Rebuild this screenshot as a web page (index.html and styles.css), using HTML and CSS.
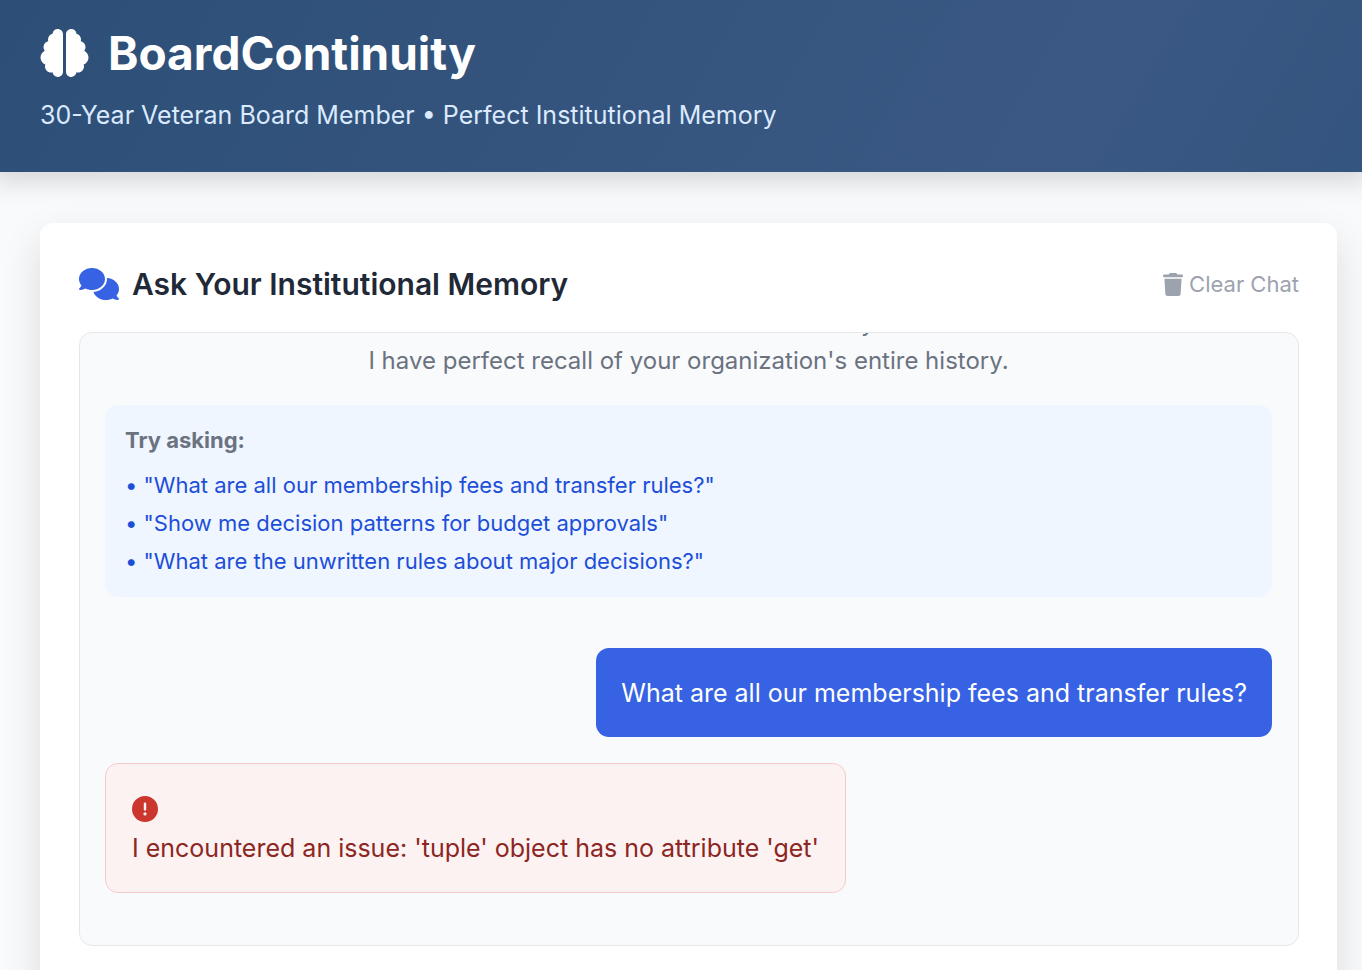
FILE: index.html
```html
<!DOCTYPE html>
<html lang="en">
<head>
<meta charset="utf-8">
<meta name="viewport" content="width=device-width, initial-scale=1">
<title>BoardContinuity</title>
<link rel="stylesheet" href="styles.css">
</head>
<body>
<header class="site-header">
  <div class="brand">
    <svg class="brand-icon" viewBox="0 0 512 512" aria-hidden="true"><path d="M184 0c30.9 0 56 25.1 56 56V456c0 30.9-25.1 56-56 56c-28.9 0-52.7-21.9-55.7-50.1c-5.2 1.4-10.7 2.1-16.3 2.1c-35.3 0-64-28.7-64-64c0-7.4 1.3-14.6 3.6-21.2C21.4 367.4 0 338.2 0 304c0-31.9 18.7-59.5 45.8-72.3C37.1 220.8 32 207 32 192c0-30.7 21.6-56.3 50.4-62.6C80.8 123.9 80 118 80 112c0-29.9 20.6-55.1 48.3-62.1C131.3 21.9 155.1 0 184 0zM328 0c28.9 0 52.6 21.9 55.7 49.9c27.8 7 48.3 32.1 48.3 62.1c0 6-.8 11.9-2.4 17.4c28.8 6.2 50.4 31.9 50.4 62.6c0 15-5.1 28.8-13.8 39.7C493.3 244.5 512 272.1 512 304c0 34.2-21.4 63.4-51.6 74.8c2.3 6.6 3.6 13.8 3.6 21.2c0 35.3-28.7 64-64 64c-5.6 0-11.1-.7-16.3-2.1c-3 28.2-26.8 50.1-55.7 50.1c-30.9 0-56-25.1-56-56V56c0-30.9 25.1-56 56-56z"/></svg>
    <h1 class="brand-name">BoardContinuity</h1>
  </div>
  <p class="tagline">30-Year Veteran Board Member • Perfect Institutional Memory</p>
</header>
<main class="page">
  <section class="card">
    <div class="card-head">
      <h2 class="card-title">
        <svg class="title-icon" viewBox="0 0 640 512" aria-hidden="true"><path d="M208 352c114.9 0 208-78.8 208-176S322.9 0 208 0S0 78.8 0 176c0 38.6 14.7 74.3 39.6 103.4c-3.5 9.4-8.7 17.7-14.2 24.7c-4.8 6.2-9.7 11-13.3 14.3c-1.8 1.6-3.3 2.9-4.3 3.7c-.5 .4-.9 .7-1.1 .8l-.2 .2C1 327.2-1.4 334.4 .8 340.9S9.1 352 16 352c21.8 0 43.8-5.6 62.1-12.5c9.2-3.5 17.8-7.4 25.2-11.4C134.1 343.3 169.8 352 208 352zM448 176c0 112.3-99.1 196.9-216.5 207C255.8 457.4 336.4 512 432 512c38.2 0 73.9-8.7 104.7-23.9c7.5 4 16 7.9 25.2 11.4c18.3 6.9 40.3 12.5 62.1 12.5c6.9 0 13.1-4.5 15.2-11.1c2.1-6.6-.2-13.8-5.8-17.9l-.2-.2c-.2-.2-.6-.4-1.1-.8c-1-.8-2.5-2-4.3-3.7c-3.6-3.3-8.5-8.1-13.3-14.3c-5.5-7-10.7-15.4-14.2-24.7c24.9-29 39.6-64.7 39.6-103.4c0-92.8-84.9-168.9-192.6-175.5c.4 5.1 .6 10.3 .6 15.500z"/></svg>
        Ask Your Institutional Memory
      </h2>
      <button class="clear-button" type="button">
        <svg class="clear-icon" viewBox="0 0 448 512" aria-hidden="true"><path d="M135.2 17.7L128 32H32C14.3 32 0 46.3 0 64S14.3 96 32 96H416c17.7 0 32-14.3 32-32s-14.3-32-32-32H320l-7.2-14.3C307.4 6.8 296.3 0 284.2 0H163.8c-12.1 0-23.2 6.8-28.6 17.7zM416 128H32L53.2 467c1.6 25.3 22.6 45 47.9 45H346.9c25.3 0 46.3-19.7 47.9-45L416 128z"/></svg>
        Clear Chat
      </button>
    </div>
    <div class="chat">
      <div class="welcome">
        <p class="welcome-text">Welcome to Institutional Memory<br>I have perfect recall of your organization's entire history.</p>
        <div class="suggestions">
          <p class="suggestions-title">Try asking:</p>
          <ul class="suggestion-list">
            <li><button class="suggestion" type="button">• "What are all our membership fees and transfer rules?"</button></li>
            <li><button class="suggestion" type="button">• "Show me decision patterns for budget approvals"</button></li>
            <li><button class="suggestion" type="button">• "What are the unwritten rules about major decisions?"</button></li>
          </ul>
        </div>
      </div>
      <div class="message message-user">What are all our membership fees and transfer rules?</div>
      <div class="message message-error">
        <svg class="error-icon" viewBox="0 0 512 512" aria-hidden="true"><path d="M256 512A256 256 0 1 0 256 0a256 256 0 1 0 0 512zm0-384c13.300 0 24 10.700 24 24V264c0 13.300-10.700 24-24 24s-24-10.700-24-24V152c0-13.300 10.700-24 24-24zM224 352a32 32 0 1 1 64 0 32 32 0 1 1 -64 0z"/></svg>
        <p class="error-text">I encountered an issue: 'tuple' object has no attribute 'get'</p>
      </div>
    </div>
  </section>
</main>
</body>
</html>
```
FILE: styles.css
```css
* {
  box-sizing: border-box;
}

body,
h1,
h2,
p,
ul {
  margin: 0;
  padding: 0;
}

body {
  background: #f9fafc;
  color: #1f2937;
  font-family: Inter, "Liberation Sans", sans-serif;
  font-size: 25px;
  line-height: 38px;
}

button {
  padding: 0;
  border: 0;
  background: none;
  font: inherit;
  cursor: pointer;
}

svg {
  display: block;
  flex: none;
  fill: currentColor;
}

.site-header {
  padding: 24px 40px 38px;
  background: linear-gradient(120deg, #2d4f77 0%, #3a5883 78%, #34557f 100%);
  box-shadow: 0 2px 24px 8px rgba(0, 0, 0, 0.14);
  color: #fff;
}

.brand {
  display: flex;
  align-items: center;
  gap: 19px;
}

.brand-icon {
  width: 49px;
  height: 48px;
}

.brand-name {
  font-size: 46px;
  line-height: 58px;
  font-weight: 700;
}

.tagline {
  margin-top: 14px;
  color: #dbeafe;
}

.page {
  padding: 51px 25px 0 40px;
}

.card {
  padding: 38px 38px 64px 39px;
  border-radius: 13px;
  background: #fff;
  box-shadow: 0 16px 40px rgba(0, 0, 0, 0.12);
}

.card-head {
  display: flex;
  align-items: center;
  justify-content: space-between;
  margin-bottom: 25px;
}

.card-title {
  display: flex;
  align-items: center;
  gap: 13px;
  font-size: 30px;
  line-height: 46px;
  font-weight: 600;
}

.title-icon {
  width: 40px;
  height: 32px;
  color: #3662e3;
}

.clear-button {
  display: flex;
  align-items: center;
  gap: 6px;
  color: #9ca3af;
  font-size: 22px;
}

.clear-icon {
  width: 20px;
  height: 23px;
}

.chat {
  display: flex;
  flex-direction: column;
  justify-content: flex-end;
  height: 614px;
  padding: 25px 26px 52px 25px;
  overflow: hidden;
  border: 1px solid #e5e7eb;
  border-radius: 13px;
  background: #f9fafc;
}

.welcome {
  margin-bottom: 51px;
  color: #6b7280;
}

.welcome-text {
  margin-bottom: 25px;
  font-size: 24px;
  text-align: center;
}

.suggestions {
  padding: 19px 20px 20px;
  border-radius: 13px;
  background: #eff6ff;
  font-size: 22px;
}

.suggestions-title {
  margin-bottom: 13px;
  line-height: 32px;
  font-weight: 700;
}

.suggestion-list {
  display: grid;
  gap: 6px;
  list-style: none;
}

.suggestion-list li {
  display: flex;
}

.suggestion {
  color: #1d4ed8;
  line-height: 32px;
  text-align: left;
}

.message {
  border-radius: 13px;
}

.message-user {
  align-self: flex-end;
  margin-bottom: 26px;
  padding: 26px 25px 25px;
  background: #3662e3;
  color: #fff;
}

.message-error {
  align-self: flex-start;
  padding: 25px 26px;
  border: 1px solid #f6caca;
  background: #fdf2f2;
  color: #8c2623;
}

.error-icon {
  width: 26px;
  height: 26px;
  margin: 7px 0;
  color: #cb372f;
}
```
